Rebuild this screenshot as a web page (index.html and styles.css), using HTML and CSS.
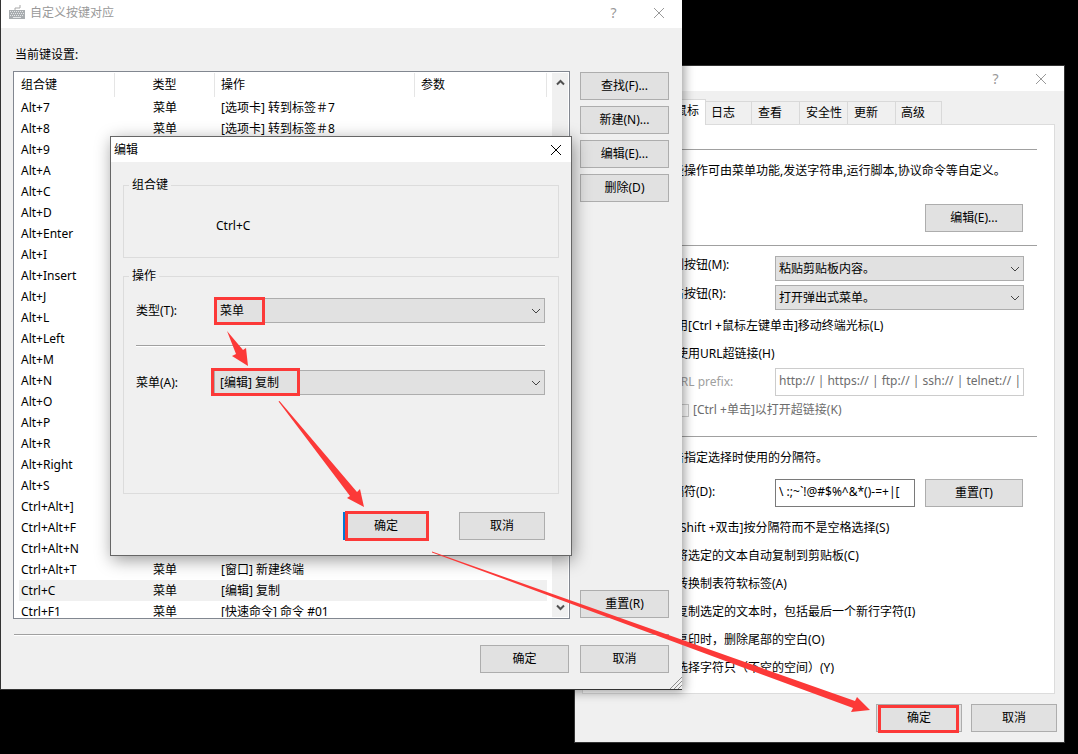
FILE: index.html
```html
<!DOCTYPE html>
<html lang="zh-CN">
<head>
  <meta charset="UTF-8">
  <meta name="viewport" content="width=device-width, initial-scale=1.0">
  <title>自定义按键对应</title>
  <link rel="stylesheet" href="styles.css">
</head>
<body>
  <main class="desktop">

    <!-- session properties -->
    <section class="window props">
      <header class="titlebar">
        <button class="tool" aria-label="帮助">?</button>
        <button class="tool" aria-label="关闭"><svg width="12" height="12" viewBox="0 0 12 12"><path d="M1 1l10 10M11 1L1 11"/></svg></button>
      </header>
      <nav class="tabs">
        <button class="tab active">鼠标</button>
        <button class="tab narrow">日志</button>
        <button class="tab">查看</button>
        <button class="tab">安全性</button>
        <button class="tab">更新</button>
        <button class="tab narrow">高级</button>
      </nav>
      <div class="panel">
        <hr>
        <p class="line text">些操作可由菜单功能,发送字符串,运行脚本,协议命令等自定义。</p>
        <div class="actions"><button class="btn wide">编辑(E)...</button></div>
        <hr>
        <div class="fields">
          <div class="field">
            <label for="middle">侧按钮(M):</label>
            <select id="middle"><option>粘贴剪贴板内容。</option></select>
          </div>
          <div class="field">
            <label for="right">右按钮(R):</label>
            <select id="right"><option>打开弹出式菜单。</option></select>
          </div>
        </div>
        <label class="line check"><input type="checkbox">用[Ctrl +鼠标左键单击]移动终端光标(L)</label>
        <label class="line check"><input type="checkbox">使用URL超链接(H)</label>
        <div class="field url">
          <label for="prefix">URL prefix:</label>
          <input type="text" id="prefix" value="http:// | https:// | ftp:// | ssh:// | telnet:// |" disabled>
        </div>
        <label class="line check sub"><input type="checkbox" disabled>[Ctrl +单击]以打开超链接(K)</label>
        <hr>
        <p class="line text">击指定选择时使用的分隔符。</p>
        <div class="field delim">
          <label for="delim">隔符(D):</label>
          <input type="text" id="delim" value="\ :;~`!@#$%^&amp;*()-=+|[">
          <button class="btn wide">重置(T)</button>
        </div>
        <div class="checks">
          <label class="line check"><input type="checkbox">[Shift +双击]按分隔符而不是空格选择(S)</label>
          <label class="line check"><input type="checkbox">将选定的文本自动复制到剪贴板(C)</label>
          <label class="line check"><input type="checkbox">转换制表符软标签(A)</label>
          <label class="line check"><input type="checkbox">复制选定的文本时，包括最后一个新行字符(I)</label>
          <label class="line check"><input type="checkbox">复印时，删除尾部的空白(O)</label>
          <label class="line check"><input type="checkbox">选择字符只（不空的空间）(Y)</label>
        </div>
      </div>
      <footer class="footer">
        <button class="btn">确定</button>
        <button class="btn">取消</button>
      </footer>
    </section>

    <!-- key mapping -->
    <section class="window keymap">
      <header class="titlebar">
        <svg class="keyboard" width="18" height="16" viewBox="0 0 18 16">
          <path d="M7 5V3h5V0" fill="none" stroke="#a8a8a8"/>
          <rect x="1" y="5" width="16" height="9" fill="#a9adb0"/>
          <path d="M2 6.500h14M3 8.500h13M2 10.500h14" stroke="#e4e6e8" stroke-dasharray="1 1"/>
          <path d="M5 12.500h8" stroke="#e4e6e8"/>
        </svg>
        <h1>自定义按键对应</h1>
        <button class="tool" aria-label="帮助">?</button>
        <button class="tool" aria-label="关闭"><svg width="12" height="12" viewBox="0 0 12 12"><path d="M1 1l10 10M11 1L1 11"/></svg></button>
      </header>
      <div class="content">
        <p class="caption">当前键设置:</p>
        <div class="columns">
          <div class="list">
            <div class="viewport">
              <table>
                <colgroup><col class="c-key"><col class="c-type"><col class="c-action"><col></colgroup>
                <thead>
                  <tr><th>组合键</th><th>类型</th><th>操作</th><th>参数</th></tr>
                </thead>
                <tbody>
                  <tr><td>Alt+7</td><td>菜单</td><td>[选项卡] 转到标签＃7</td><td></td></tr>
                  <tr><td>Alt+8</td><td>菜单</td><td>[选项卡] 转到标签＃8</td><td></td></tr>
                  <tr><td>Alt+9</td><td></td><td></td><td></td></tr>
                  <tr><td>Alt+A</td><td></td><td></td><td></td></tr>
                  <tr><td>Alt+C</td><td></td><td></td><td></td></tr>
                  <tr><td>Alt+D</td><td></td><td></td><td></td></tr>
                  <tr><td>Alt+Enter</td><td></td><td></td><td></td></tr>
                  <tr><td>Alt+I</td><td></td><td></td><td></td></tr>
                  <tr><td>Alt+Insert</td><td></td><td></td><td></td></tr>
                  <tr><td>Alt+J</td><td></td><td></td><td></td></tr>
                  <tr><td>Alt+L</td><td></td><td></td><td></td></tr>
                  <tr><td>Alt+Left</td><td></td><td></td><td></td></tr>
                  <tr><td>Alt+M</td><td></td><td></td><td></td></tr>
                  <tr><td>Alt+N</td><td></td><td></td><td></td></tr>
                  <tr><td>Alt+O</td><td></td><td></td><td></td></tr>
                  <tr><td>Alt+P</td><td></td><td></td><td></td></tr>
                  <tr><td>Alt+R</td><td></td><td></td><td></td></tr>
                  <tr><td>Alt+Right</td><td></td><td></td><td></td></tr>
                  <tr><td>Alt+S</td><td></td><td></td><td></td></tr>
                  <tr><td>Ctrl+Alt+]</td><td></td><td></td><td></td></tr>
                  <tr><td>Ctrl+Alt+F</td><td></td><td></td><td></td></tr>
                  <tr><td>Ctrl+Alt+N</td><td></td><td></td><td></td></tr>
                  <tr><td>Ctrl+Alt+T</td><td>菜单</td><td>[窗口] 新建终端</td><td></td></tr>
                  <tr class="selected"><td>Ctrl+C</td><td>菜单</td><td>[编辑] 复制</td><td></td></tr>
                  <tr><td>Ctrl+F1</td><td>菜单</td><td>[快速命令] 命令 #01</td><td></td></tr>
                </tbody>
              </table>
            </div>
            <div class="scrollbar">
              <svg width="9" height="7" viewBox="0 0 9 7"><path d="M1 5.500l3.500-3.500L8 5.500"/></svg>
              <svg width="9" height="7" viewBox="0 0 9 7"><path d="M1 1.500l3.500 3.500L8 1.500"/></svg>
            </div>
          </div>
          <div class="side">
            <button class="btn">查找(F)...</button>
            <button class="btn">新建(N)...</button>
            <button class="btn">编辑(E)...</button>
            <button class="btn">删除(D)</button>
            <button class="btn last">重置(R)</button>
          </div>
        </div>
        <hr>
        <footer class="footer">
          <button class="btn">确定</button>
          <button class="btn">取消</button>
        </footer>
      </div>
      <svg class="grip" width="12" height="12" viewBox="0 0 12 12"><path d="M0 12L12 0M4 12l8-8M8 12l4-4" stroke="#8c8c8c"/></svg>
    </section>

    <!-- edit dialog -->
    <section class="window dialog">
      <header class="titlebar">
        <h2>编辑</h2>
        <button class="tool" aria-label="关闭"><svg width="12" height="12" viewBox="0 0 12 12"><path d="M1 1l10 10M11 1L1 11"/></svg></button>
      </header>
      <div class="content">
        <fieldset class="combo">
          <legend>组合键</legend>
          <p>Ctrl+C</p>
        </fieldset>
        <fieldset class="action">
          <legend>操作</legend>
          <div class="field">
            <label for="type">类型(T):</label>
            <select id="type"><option>菜单</option></select>
          </div>
          <hr>
          <div class="field">
            <label for="menu">菜单(A):</label>
            <select id="menu"><option>[编辑] 复制</option></select>
          </div>
        </fieldset>
        <footer class="footer">
          <button class="btn default">确定</button>
          <button class="btn">取消</button>
        </footer>
      </div>
    </section>

    <!-- step markers -->
    <svg class="marks" width="1078" height="754" viewBox="0 0 1078 754">
      <g fill="none" stroke="#fc3938" stroke-width="3">
        <rect x="215.500" y="298.500" width="48" height="25"/>
        <rect x="212.500" y="369.500" width="86" height="25"/>
        <rect x="346.500" y="512.500" width="81" height="27"/>
        <rect x="879.500" y="706.500" width="78" height="25"/>
      </g>
      <g fill="#fc3938">
        <path d="M227 331L236 354L232 356L248 366L246 348L243 350Z"/>
        <path d="M278.500 401.500L350 496L347 498L364 507L360 489L357 492L279.500 401Z"/>
        <path d="M432 552.500L853 708L851 712L870 710L857 697L855 701L432 551.500Z"/>
      </g>
    </svg>
  </main>
</body>
</html>
```
FILE: styles.css
```css
* {
  box-sizing: border-box;
}
body {
  margin: 0;
  background: #000;
  color: #000;
  font-family: "Noto Sans", "Noto Sans CJK SC", sans-serif;
  font-size: 12px;
  line-height: 16px;
}
h1, h2, p {
  margin: 0;
  font-size: 12px;
  font-weight: normal;
}
button, input, select {
  font: inherit;
  color: inherit;
}
.desktop {
  position: relative;
  min-height: 100vh;
  overflow: hidden;
}

/* windows */
.window {
  position: absolute;
  background: #f0f0f0;
  border: 1px solid #333;
}
.props {
  left: 574px;
  top: 65px;
  width: 491px;
}
.keymap {
  left: 0;
  top: 0;
  width: 682px;
  border-width: 0 0 1px 1px;
  box-shadow: 2px 2px 10px rgba(0, 0, 0, 0.4);
}
.dialog {
  left: 110px;
  top: 136px;
  width: 462px;
  border-color: #666;
  box-shadow: 2px 4px 16px rgba(0, 0, 0, 0.4);
}
.titlebar {
  display: flex;
  align-items: center;
  justify-content: flex-end;
  height: 25px;
  padding-right: 1px;
  background: #fff;
  color: #999;
}
.titlebar h1, .titlebar h2 {
  flex: 1;
}
.tool {
  width: 45px;
  height: 24px;
  padding: 0;
  border: 0;
  background: none;
  font-size: 14px;
}
.tool svg {
  display: block;
  margin: auto;
  stroke: currentColor;
  fill: none;
}
.keymap .titlebar {
  height: 28px;
  padding-left: 7px;
  padding-bottom: 2px;
  gap: 4px;
}
.keymap .tool + .tool {
  margin-left: -4px;
}
.dialog .titlebar {
  padding-left: 3px;
  color: #000;
}
.dialog .tool {
  width: 29px;
}

/* controls */
.btn {
  width: 89px;
  height: 28px;
  padding: 0;
  border: 1px solid #adadad;
  background: #e1e1e1;
}
.wide {
  width: 98px;
}
.default {
  border: 2px solid #0078d7;
}
select {
  flex: 1;
  height: 25px;
  padding: 0 3px;
  border: 1px solid #adadad;
  border-radius: 0;
  appearance: none;
  background: #e1e1e1 url("data:image/svg+xml,%3Csvg xmlns='http://www.w3.org/2000/svg' width='10' height='6'%3E%3Cpath d='M1 1l4 4 4-4' fill='none' stroke='%23444'/%3E%3C/svg%3E") no-repeat right 3px center;
}
input[type="text"] {
  flex: 1;
  min-width: 0;
  height: 28px;
  padding: 0 3px 4px;
  border: 1px solid #7a7a7a;
  background: #fff;
}
input[type="text"]:disabled {
  border-color: #ccc;
  color: #6d6d6d;
}
input[type="checkbox"] {
  width: 13px;
  height: 13px;
  margin: 0;
  appearance: none;
  border: 1px solid #333;
  background: #fff;
}
input[type="checkbox"]:disabled {
  border-color: #ccc;
}
hr {
  margin: 0;
  border: 0;
  border-top: 1px solid #a0a0a0;
}
.field {
  display: flex;
}
.footer {
  display: flex;
  justify-content: flex-end;
}

/* session properties */
.tabs {
  display: flex;
  align-items: flex-end;
  height: 33px;
  padding-left: 92px;
}
.tab {
  width: 48px;
  height: 23px;
  padding: 0 0 0 6px;
  border: 1px solid #d9d9d9;
  border-width: 1px 1px 0 0;
  background: #f0f0f0;
  text-align: left;
  white-space: nowrap;
}
.tab.narrow {
  width: 46px;
  padding-left: 5px;
}
.tab.active {
  position: relative;
  width: 39px;
  height: 26px;
  margin-bottom: -1px;
  padding: 0 0 4px 8px;
  background: #fff;
}
.panel {
  margin: 0 9px 0 7px;
  padding: 24px 17px 11px 14px;
  border: 1px solid #dcdcdc;
  background: #fff;
}
.line {
  display: flex;
  align-items: center;
  height: 28px;
}
.text {
  margin: 7px 0;
  padding-left: 75px;
  white-space: nowrap;
}
.actions {
  display: flex;
  justify-content: flex-end;
  margin: 19px 0 13px;
  padding-right: 14px;
}
.fields {
  display: grid;
  gap: 4px;
  margin: 10px 0 2px;
}
.panel .field {
  padding: 0 13px 0 75px;
}
.panel .field label {
  width: 103px;
  padding-top: 1px;
}
.check {
  gap: 4px;
  padding-left: 62px;
}
.sub {
  margin-bottom: 12px;
  padding-left: 79px;
  color: #6d6d6d;
}
.panel .url label {
  padding-top: 6px;
  color: #a0a0a0;
}
.panel .delim {
  padding-right: 14px;
}
.panel .delim label {
  padding-top: 5px;
}
.delim .btn {
  margin-left: 10px;
}
.checks {
  margin-top: 7px;
}
.props > .footer {
  gap: 9px;
  padding: 10px 7px;
}
.props > .footer .btn, .dialog .btn {
  width: 86px;
}

/* key mapping */
.keymap .content {
  padding: 19px 13px 16px 12px;
}
.caption {
  margin-bottom: 8px;
  padding-left: 2px;
}
.columns {
  display: flex;
  gap: 10px;
}
.list {
  flex: 1;
  display: flex;
  gap: 5px;
  height: 548px;
  padding: 1px 1px 1px 5px;
  border: 1px solid #828790;
  background: #fff;
}
.viewport {
  flex: 1;
  overflow: hidden;
}
table {
  width: 100%;
  table-layout: fixed;
  border-collapse: separate;
  border-spacing: 0;
}
.c-key {
  width: 96px;
}
.c-type {
  width: 100px;
}
.c-action {
  width: 200px;
}
th, td {
  height: 21px;
  padding: 0 0 0 2px;
  font-weight: normal;
  text-align: left;
  white-space: nowrap;
}
th {
  height: 24px;
  border-right: 1px solid #e5e5e5;
}
th:nth-child(n+3), td:nth-child(n+3) {
  padding-left: 6px;
}
th:nth-child(2), td:nth-child(2) {
  padding: 0;
  text-align: center;
}
.selected td {
  background: #f0f0f0;
}
.scrollbar {
  display: flex;
  flex-direction: column;
  justify-content: space-between;
  align-items: center;
  width: 16px;
  padding: 6px 0;
  background: #f0f0f0;
}
.scrollbar svg {
  fill: none;
  stroke: #505050;
  stroke-width: 2;
}
.side {
  display: flex;
  flex-direction: column;
  gap: 6px;
  padding: 1px 0;
}
.side .last {
  margin-top: auto;
}
.keymap hr {
  margin: 15px 0 9px 1px;
  border-bottom: 1px solid #fff;
}
.keymap .footer {
  gap: 11px;
}
.grip {
  position: absolute;
  right: 0;
  bottom: 0;
}

/* edit dialog */
.dialog .content {
  padding: 15px 12px;
}
fieldset {
  margin: 0;
  border: 1px solid #dcdcdc;
}
legend {
  margin-left: -7px;
  padding: 0 3px;
}
.combo {
  height: 81px;
  margin-bottom: 10px;
  padding: 25px 12px 0;
}
.combo p {
  padding-left: 80px;
}
.action {
  height: 226px;
  padding: 14px 13px 0 12px;
}
.action label {
  width: 78px;
  padding-top: 5px;
}
.action select {
  padding-left: 5px;
}
.action hr {
  margin: 22px 0 23px;
  border-bottom: 1px solid #fff;
}
.dialog .footer {
  gap: 30px;
  margin-top: 18px;
  padding-right: 14px;
}

/* markers lie over every window */
.marks {
  position: absolute;
  left: 0;
  top: 0;
  pointer-events: none;
}
```
